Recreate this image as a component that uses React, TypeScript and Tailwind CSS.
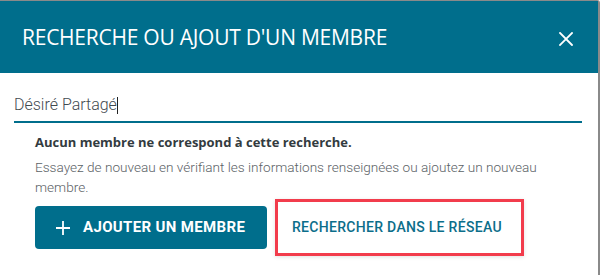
import React from "react";

export default function App() {
  return (
    <div className="w-[602px] h-[275px] bg-white overflow-hidden relative">
      <div className="w-[600px] h-[275px] border-r-2 border-t border-[#8a8a8a] rounded-tr-[3px] flex flex-col">
        <div className="h-[72px] bg-[#006E8C] flex items-center justify-between pl-[22px] pr-[25px] shrink-0">
          <h1 className="text-white text-[21px] leading-none tracking-[-0.25px] pt-[1px]" style={{ fontFamily: '"Open Sans", sans-serif' }}>
            RECHERCHE OU AJOUT D'UN MEMBRE
          </h1>
          <svg width="14" height="14" viewBox="0 0 14 14" className="mt-[4px]">
            <path d="M1 1 L13 13 M13 1 L1 13" stroke="white" strokeWidth="1.8" strokeLinecap="square" />
          </svg>
        </div>
        <div className="pl-[14px] pr-[16px] pt-[22px]">
          <div className="border-b-2 border-[#006E8C] pb-[6px] flex items-center" style={{ fontFamily: 'Roboto, sans-serif' }}>
            <span className="text-[16px] leading-[20px] font-light text-[#3f4a4f]">Désiré Partagé</span>
            <span className="w-[1px] h-[17px] bg-[#222]" />
          </div>
        </div>
        <div className="pl-[35px] pr-[30px] pt-[10px]">
          <p className="text-[13px] font-bold text-[#333b40] leading-[18px]" style={{ fontFamily: '"Open Sans", sans-serif' }}>
            Aucun membre ne correspond à cette recherche.
          </p>
          <p className="mt-[6px] text-[13.6px] font-light text-[#5b6266] leading-[20px]" style={{ fontFamily: 'Roboto, sans-serif' }}>
            Essayez de nouveau en vérifiant les informations renseignées ou ajoutez un nouveau membre.
          </p>
          <div className="flex items-center mt-[2px] gap-[8px]" style={{ fontFamily: 'Roboto, sans-serif' }}>
            <button className="w-[232px] h-[43px] bg-[#006E8C] rounded-[4px] flex items-center pl-[21px] text-white text-[15px] font-bold tracking-[0.35px]">
              <svg width="14" height="14" viewBox="0 0 14 14" className="mr-[13px]">
                <path d="M7 0 V14 M0 7 H14" stroke="white" strokeWidth="1.8" />
              </svg>
              AJOUTER UN MEMBRE
            </button>
            <button className="w-[249px] h-[57px] border-[3px] border-[#F23C4C] shadow-[0_1px_4px_rgba(0,0,0,0.12)] flex items-center pl-[14px] text-[#0C6E8A] text-[14px] font-medium tracking-[0.3px]">
              RECHERCHER DANS LE RÉSEAU
            </button>
          </div>
        </div>
      </div>
    </div>
  );
}
